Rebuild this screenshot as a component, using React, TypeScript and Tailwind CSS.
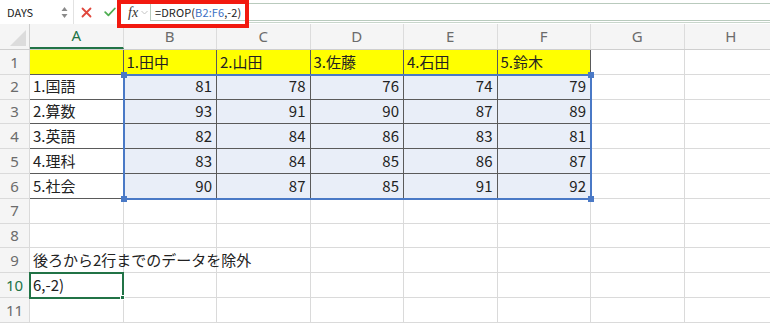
import React from 'react'

const COLS = ['A', 'B', 'C', 'D', 'E', 'F', 'G', 'H']
const HEADERS = ['', '1.田中', '2.山田', '3.佐藤', '4.石田', '5.鈴木']
const SUBJECTS = ['1.国語', '2.算数', '3.英語', '4.理科', '5.社会']
const SCORES = [
  [81, 78, 76, 74, 79],
  [93, 91, 90, 87, 89],
  [82, 84, 86, 83, 81],
  [83, 84, 85, 86, 87],
  [90, 87, 85, 91, 92],
]

function FormulaBar() {
  return (
    <div className="relative flex h-[24px] bg-white shrink-0">
      {/* name box */}
      <div className="flex items-center w-[74px] pl-[7px] pr-[5px] border-r border-[#e2e2e2]">
        <span className="text-[11px] text-[#222] flex-1">DAYS</span>
        <svg width="7" height="13" viewBox="0 0 7 13">
          <path d="M3.5 1 L6.5 5 L0.5 5 Z" fill="#8a8a8a" />
          <path d="M3.5 12 L6.5 8 L0.5 8 Z" fill="#8a8a8a" />
        </svg>
      </div>
      {/* cancel / enter */}
      <div className="flex items-center w-[46px] pl-[7px] gap-[12px]">
        <svg width="11" height="11" viewBox="0 0 11 11">
          <path d="M1.5 1.5 L9.5 9.5 M9.5 1.5 L1.5 9.5" stroke="#e0473c" strokeWidth="1.8" strokeLinecap="round" />
        </svg>
        <svg width="12" height="10" viewBox="0 0 12 10">
          <path d="M1.2 5.2 L4.4 8.3 L10.8 1.5" stroke="#4fae52" strokeWidth="1.8" fill="none" strokeLinecap="round" strokeLinejoin="round" />
        </svg>
      </div>
      {/* fx */}
      <div className="flex items-center w-[30px] pl-[8px] gap-[3px]">
        <span className="font-['Liberation_Serif',serif] italic text-[14px] text-[#333]">fx</span>
        <svg width="7" height="5" viewBox="0 0 7 5">
          <path d="M0.5 1 L3.5 4 L6.5 1" stroke="#c4c4c4" strokeWidth="1" fill="none" />
        </svg>
      </div>
      {/* formula input */}
      <div className="flex-1 mt-[3px] h-[18px] border-t border-b border-l border-[#b9cabd] flex items-center pl-[4px]">
        <span className="text-[11px] text-[#222] tracking-[0.1px]">
          =DROP(<span className="text-[#3b6fc4]">B2:F6</span>,-2)
        </span>
      </div>
      <div className="absolute left-[248px] right-0 bottom-[1px] h-px bg-[#c9d6cc]" />
      {/* annotation box */}
      <div className="absolute left-[117px] top-0 w-[132px] h-[28px] border-[4px] border-[#f2190f] z-20 pointer-events-none" />
    </div>
  )
}

export default function App() {
  const colW = 'w-[93.5px] shrink-0'
  return (
    <div className="w-[770px] h-[326px] overflow-hidden bg-white font-['Noto_Sans_CJK_JP','Noto_Sans',sans-serif] flex flex-col">
      <FormulaBar />

      {/* column headers */}
      <div className="flex h-[26px] shrink-0 bg-[#f5f5f5] border-b border-[#cfcfcf]">
        <div className="w-[30px] shrink-0 relative border-r border-[#cfcfcf]">
          <svg className="absolute right-[3px] bottom-[3px]" width="16" height="16" viewBox="0 0 16 16">
            <path d="M16 0 L16 16 L0 16 Z" fill="#dcdcdc" />
          </svg>
        </div>
        {COLS.map((c) => (
          <div
            key={c}
            className={`${colW} flex items-center justify-center text-[15px] font-['Noto_Sans',sans-serif] border-r border-[#dcdcdc] ${
              c === 'A' ? 'text-[#217346] border-b-2 border-b-[#217346]' : 'text-[#6b6b6b]'
            }`}
          >
            {c}
          </div>
        ))}
      </div>

      {/* sheet body */}
      <div className="relative flex-1">
        {Array.from({ length: 11 }).map((_, r) => {
          const row = r + 1
          return (
            <div key={row} className="flex h-[24.8px]">
              <div
                className={`w-[30px] shrink-0 bg-[#f5f5f5] border-r border-b border-[#dadada] flex items-center justify-center text-[15px] font-['Noto_Sans',sans-serif] ${
                  row === 10 ? 'text-[#217346]' : 'text-[#6b6b6b]'
                }`}
              >
                {row}
              </div>
              {COLS.map((c, ci) => {
                const inTable = row <= 6 && ci <= 5
                const yellow = row === 1 && ci <= 5
                const selected = row >= 2 && row <= 6 && ci >= 1 && ci <= 5
                let text: string | number = ''
                let right = false
                if (row === 1 && ci <= 5) text = HEADERS[ci]
                if (row >= 2 && row <= 6) {
                  if (ci === 0) text = SUBJECTS[row - 2]
                  else if (ci <= 5) {
                    text = SCORES[row - 2][ci - 1]
                    right = true
                  }
                }
                if (row === 10 && ci === 0) text = '6,-2)'
                return (
                  <div
                    key={c}
                    className={`${colW} relative flex items-center border-r border-b text-[15px] text-[#222] ${
                      inTable ? 'border-[#5a5a5a]' : 'border-[#dadada]'
                    } ${yellow ? 'bg-[#ffff00]' : selected ? 'bg-[#e9eef8]' : 'bg-white'} ${
                      right ? 'justify-end pr-[4px]' : 'pl-[3px]'
                    }`}
                  >
                    {row === 9 && ci === 0 ? (
                      <span className="absolute left-[3px] whitespace-nowrap z-10">後ろから2行までのデータを除外</span>
                    ) : (
                      <span className="whitespace-nowrap">{text}</span>
                    )}
                  </div>
                )
              })}
            </div>
          )
        })}

        {/* spill range selection B2:F6 */}
        <div className="absolute left-[123px] top-[24px] w-[469px] h-[126px] border-2 border-[#4a79c6] pointer-events-none">
          <div className="absolute -left-[4px] -top-[4px] w-[6px] h-[6px] bg-[#4a79c6]" />
          <div className="absolute -right-[4px] -top-[4px] w-[6px] h-[6px] bg-[#4a79c6]" />
          <div className="absolute -left-[4px] -bottom-[4px] w-[6px] h-[6px] bg-[#4a79c6]" />
          <div className="absolute -right-[4px] -bottom-[4px] w-[6px] h-[6px] bg-[#4a79c6]" />
        </div>

        {/* active cell A10 */}
        <div className="absolute left-[29px] top-[222px] w-[95px] h-[26.5px] border-2 border-[#217346] pointer-events-none">
          <div className="absolute -right-[3px] -bottom-[3px] w-[5px] h-[5px] bg-[#217346] border border-white" />
        </div>
      </div>
    </div>
  )
}
